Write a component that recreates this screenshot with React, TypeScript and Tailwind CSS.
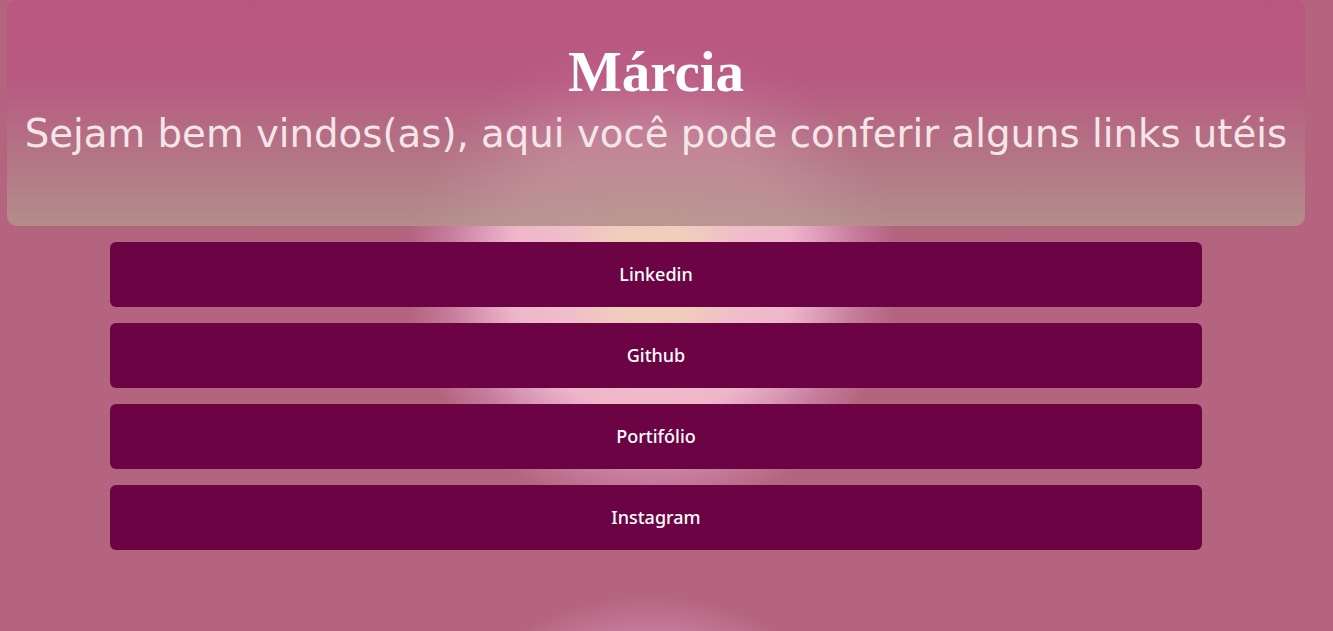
const links = ["Linkedin", "Github", "Portifólio", "Instagram"];

export default function App() {
  return (
    <div className="min-h-screen w-full bg-[#b4647e] bg-[radial-gradient(circle_245px_at_652px_272px,#f2d1b5_0%,#f0cdbc_20%,#f0bdca_38%,#efb6ca_58%,#dc9cb8_70%,#c67c9c_84%,rgba(180,100,126,0)_100%),radial-gradient(circle_245px_at_650px_840px,#f2d1b5_0%,#f0cdbc_20%,#f0bdca_38%,#efb6ca_58%,#dc9cb8_70%,#c67c9c_84%,rgba(180,100,126,0)_100%)] bg-no-repeat">
      <div className="ml-[7px] w-[1298px]">
        {/* cabeçalho */}
        <header className="flex h-[226px] flex-col items-center rounded-[10px] bg-[linear-gradient(to_bottom,rgba(184,86,128,0.97)_0%,rgba(184,86,128,0.8)_35%,rgba(180,118,135,0.76)_65%,rgba(179,146,140,0.9)_100%)] pt-[40px]">
          <h1 className="font-['Liberation_Serif',serif] text-[57px] leading-[64px] font-bold text-white">
            Márcia
          </h1>
          <p className="mt-[7px] font-['DejaVu_Sans',sans-serif] text-[38.7px] leading-[46px] whitespace-nowrap text-[#f4e6e8]">
            Sejam bem vindos(as), aqui você pode conferir alguns links utéis
          </p>
        </header>

        {/* links */}
        <nav className="mx-auto mt-[16px] flex w-[1092px] flex-col gap-[16px]">
          {links.map((link) => (
            <a
              key={link}
              href="#"
              className="flex h-[65px] items-center justify-center rounded-[6px] bg-[#6c0345] font-['Comic_Sans_MS','Noto_Sans',sans-serif] text-[18px] font-medium text-white"
            >
              {link}
            </a>
          ))}
        </nav>
      </div>
    </div>
  );
}
